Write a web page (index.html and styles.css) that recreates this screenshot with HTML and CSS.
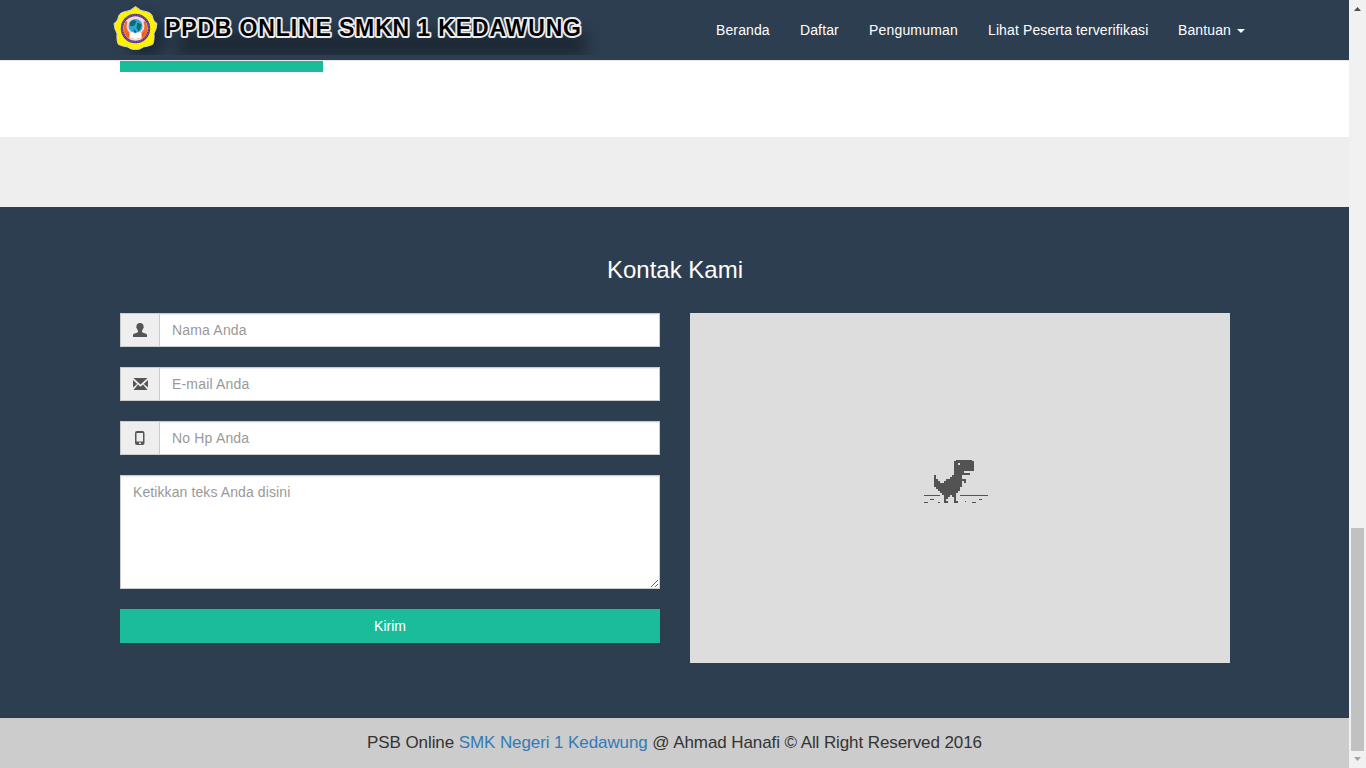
FILE: index.html
```html
<!DOCTYPE html>
<html lang="id">
<head>
<meta charset="utf-8">
<title>PPDB Online SMKN 1 Kedawung</title>
<link rel="stylesheet" href="styles.css">
</head>
<body>
<div class="page">
  <header class="navbar">
    <svg class="brand" width="500" height="55" viewBox="100 0 500 55" role="img" aria-label="PPDB Online SMKN 1 Kedawung">
      <defs><filter id="soft" x="-10%" y="-80%" width="120%" height="260%"><feGaussianBlur stdDeviation="8"/></filter></defs>
      <g filter="url(#soft)" opacity=".38"><circle cx="146" cy="38" r="19"/><rect x="178" y="33" width="408" height="22"/></g>
      <g transform="translate(135.5 28.5)">
        <path d="M-12-16.500Q-5-17 0-22Q5-17 12-16.500Q17-15 17.500-10Q18-7 21.500-5Q21 1 18.500 5Q19 13 17 16Q12 18 8 18.500Q4 21.500 0 21Q-4 21.500-8 18.500Q-12 18-17 16Q-19 13-18.500 5Q-21 1-21.500-5Q-18-7-17.500-10Q-17-15-12-16.500Z" fill="#fff200" stroke="#d5d5c8" stroke-width="1"/>
        <circle r="13.500" fill="#f3d9e0" stroke="#5a3390" stroke-width="2.500"/>
        <circle r="13.500" fill="none" stroke="#a894bf" stroke-width=".8" stroke-dasharray="1 1.6"/>
        <path d="M-9-7Q-14 3-7 9H7Q14 3 9-7Q12 2 5 6H-5Q-12 2-9-7Z" fill="#f04a22" stroke="#f26a24" stroke-width="2"/>
        <circle cy="-2.500" r="7" fill="#28a9dd"/>
        <path d="M-5-7Q-1-10 1-7L-1-3L-4-2Q-7-3-5-7ZM2-6L6-4L5 0L3 3L1-1ZM-2 0L1 3L-1 5Z" fill="#126b62"/>
        <path d="M-6 4Q-3 3 0 5Q3 3 6 4V10Q3 9 0 11Q-3 9-6 10Z" fill="#fff" stroke="#e4c9be" stroke-width=".5"/>
      </g>
      <text class="brand-outline" x="165" y="36.3" textLength="416" aria-hidden="true">PPDB ONLINE SMKN 1 KEDAWUNG</text>
    </svg>
    <nav class="menu">
      <a class="w84">Beranda</a><a class="w69">Daftar</a><a class="w119">Pengumuman</a><a class="w190">Lihat Peserta terverifikasi</a><a>Bantuan <i class="caret"></i></a>
    </nav>
  </header>
  <section class="intro"><div class="intro-button"></div></section>
  <div class="divider"></div>
  <section class="contact">
    <h3>Kontak Kami</h3>
    <div class="columns">
      <form class="form">
        <label class="group"><span class="addon"><svg width="14" height="14" viewBox="0 0 14 14"><path d="M7 0C4.500 0 3.400 1.300 3.500 3.500C3 3.800 3.300 5 3.800 5.300C4 6.600 4.800 7.300 5 7.800V9C4 10 .8 10.300 0 11.500V14H14V11.500C13.200 10.300 10 10 9 9V7.800C9.400 7.200 10.100 6.400 10.200 5.300C10.800 5 11 3.800 10.500 3.500C10.600 1.300 9.500 0 7 0Z"/></svg></span><input placeholder="Nama Anda"></label>
        <label class="group"><span class="addon"><svg width="15" height="14" viewBox="0 0 15 14"><path d="M.5 1H14.500L7.500 7.400ZM0 3L4.200 7L0 10.500ZM15 3V10.500L10.800 7ZM5 7.600L7.500 9.800L10 7.600L14.500 13H.5Z"/></svg></span><input placeholder="E-mail Anda"></label>
        <label class="group"><span class="addon"><svg width="14" height="14" viewBox="0 0 14 14"><path fill-rule="evenodd" d="M4 0H9.500Q11.500 0 11.500 2V12Q11.500 14 9.500 14H4Q2 14 2 12V2Q2 0 4 0ZM3.500 2V10.500H10V2ZM6 11.500V13H8V11.500Z"/></svg></span><input placeholder="No Hp Anda"></label>
        <textarea placeholder="Ketikkan teks Anda disini"></textarea>
        <button type="button">Kirim</button>
      </form>
      <div class="map">
        <svg width="64" height="43" viewBox="0 0 64 43" shape-rendering="crispEdges" fill="#535353">
          <g transform="translate(10 -1) scale(2)"><path d="M11 .5h8V1h1v5h-5v1h3v1h-4v2h2v2h-1v-1h-1v3h-1v2h-1v1h-1v1v3h1v1h-2v-3h-1v-1H8v1H7v1H6v1h1v1H5v-4H4v-1H3v-1H2v-1H1v-1H0V8h1v2h1v1h1v1h2v-1h1v-1h2V9h1V8h1V1h1Z"/><rect x="12" y="2" width="1" height="1" fill="#ddd"/></g>
          <path d="M0 35h16v1H0zM36 35h28v1H36zM6 39h4v1H6zM55 39h3v1h-3zM0 42h4v1H0zM14 42h2v1h-2zM41 41h1v1h-1zM48 42h4v1h-4z"/>
        </svg>
      </div>
    </div>
  </section>
  <footer class="footer"><p>PSB Online <a>SMK Negeri 1 Kedawung</a> @ Ahmad Hanafi © All Right Reserved 2016</p></footer>
</div>
<div class="scrollbar">
  <svg width="7" height="4" viewBox="0 0 7 4" fill="#505050"><path d="M0 4L3.5 0L7 4Z"/></svg>
  <div class="thumb"></div>
  <svg width="7" height="4" viewBox="0 0 7 4" fill="#a3a3a3"><path d="M0 0H7L3.5 4Z"/></svg>
</div>
</body>
</html>
```
FILE: styles.css
```css
* { box-sizing: border-box; }
body { margin: 0; height: 768px; display: flex; overflow: hidden; font: 14px/20px "Liberation Sans", Arial, sans-serif; color: #333; background: #fff; }
.page { width: 1349px; display: flex; flex-direction: column; }
.navbar { height: 61px; flex: none; display: flex; justify-content: space-between; padding: 0 89px 0 100px; background: #2c3e50; border-bottom: 1px solid #e7e7e7; }
.brand-outline { font: bold 23px "Liberation Sans", Arial, sans-serif; fill: #000; stroke: #ededed; stroke-width: 3.8px; stroke-linejoin: round; paint-order: stroke; }
.menu { display: flex; color: #fff; }
.menu a { padding: 20px 15px; white-space: nowrap; letter-spacing: .12px; }
.menu .w84 { width: 84px; }
.menu .w69 { width: 69px; }
.menu .w119 { width: 119px; letter-spacing: .18px; }
.menu .w190 { width: 190px; }
.caret { display: inline-block; margin-left: 2px; vertical-align: middle; border-top: 4px solid #fff; border-left: 4px solid transparent; border-right: 4px solid transparent; }
.intro { height: 76px; padding-left: 120px; flex: none; }
.intro-button { width: 203px; height: 11px; background: #1abc9c; }
.divider { height: 70px; background: #eee; flex: none; }
.contact { height: 511px; flex: none; padding: 50px 119px 0 120px; background: #2c3e50; border-bottom: 1px solid #293a4b; }
h3 { margin: 0 0 30px; font-size: 24px; line-height: 26px; font-weight: 400; text-align: center; color: #fff; }
.columns { display: flex; gap: 30px; }
.form { width: 540px; display: flex; flex-direction: column; gap: 20px; }
.group { display: flex; height: 34px; border: 1px solid #ccc; background: #fff; }
.addon { width: 39px; flex: none; display: flex; align-items: center; justify-content: center; background: #eee; border-right: 1px solid #ccc; fill: #555; }
input { flex: 1; min-width: 0; border: 0; padding: 0 12px; font: inherit; letter-spacing: .18px; background: #fff; box-shadow: inset 0 1px 1px rgba(0,0,0,.075); }
textarea { display: block; height: 114px; padding: 6px 12px; font: inherit; letter-spacing: .1px; border: 1px solid #ccc; border-radius: 0; background: #fff; resize: vertical; box-shadow: inset 0 1px 1px rgba(0,0,0,.075); }
input::placeholder, textarea::placeholder { color: #999; opacity: 1; }
button { height: 34px; padding: 0; border: 0; background: #1abc9c; color: #fff; font: inherit; }
.map { width: 540px; height: 350px; background: #ddd; padding: 147px 0 0 234px; }
.map svg { display: block; }
.footer { height: 50px; flex: none; background: #ccc; }
.footer p { margin: 0; padding-top: 15px; text-align: center; font-size: 17px; line-height: 20px; letter-spacing: -.09px; }
.footer a { color: #337ab7; }
.scrollbar { width: 17px; background: #f1f1f1; display: flex; flex-direction: column; align-items: center; padding: 7px 0; }
.thumb { width: 13px; height: 223px; margin-top: 517px; margin-bottom: 6px; background: #c1c1c1; }
```
